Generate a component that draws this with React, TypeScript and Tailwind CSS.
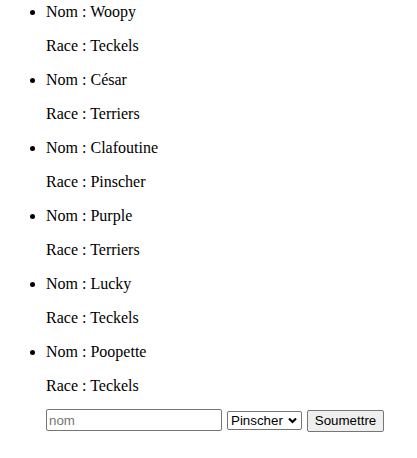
const dogs = [
  { nom: "Woopy", race: "Teckels" },
  { nom: "César", race: "Terriers" },
  { nom: "Clafoutine", race: "Pinscher" },
  { nom: "Purple", race: "Terriers" },
  { nom: "Lucky", race: "Teckels" },
  { nom: "Poopette", race: "Teckels" },
];

const App = () => {
  return (
    <div className="font-['Liberation_Serif',serif] text-[16px] leading-[18px] text-black bg-white pt-[3px] min-h-[458px]">
      <ul className="list-disc pl-[46px]">
        {dogs.map((d) => (
          <li key={d.nom}>
            Nom : {d.nom}
            <p className="my-4">Race : {d.race}</p>
          </li>
        ))}
      </ul>
      <form className="flex items-start -mt-[2px] pl-[46px] font-['Liberation_Sans',Arial,sans-serif] text-[13.33px]">
        <input
          type="text"
          placeholder="nom"
          className="w-[176px] h-[22px] border border-[#767676] rounded-[2px] px-[2px] placeholder:text-[#757575] outline-none"
        />
        <div className="relative ml-[5px] mt-[2px]">
          <select
            defaultValue="Pinscher"
            className="appearance-none w-[75px] h-[19px] border border-[#767676] rounded-[2px] pl-[3px] leading-[17px] bg-white"
          >
            <option>Teckels</option>
            <option>Terriers</option>
            <option>Pinscher</option>
          </select>
          <svg
            className="absolute right-[5px] top-[6px] pointer-events-none"
            width="9"
            height="7"
            viewBox="0 0 9 7"
          >
            <path d="M1 1.5 L4.5 5 L8 1.5" fill="none" stroke="#000" strokeWidth="2.2" />
          </svg>
        </div>
        <button
          type="button"
          className="ml-[5px] mt-[1px] w-[77px] h-[22px] bg-[#efefef] border border-[#767676] rounded-[2px] text-black"
        >
          Soumettre
        </button>
      </form>
    </div>
  );
};

export default App;
